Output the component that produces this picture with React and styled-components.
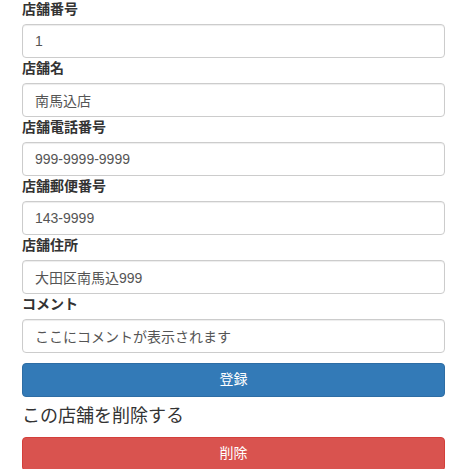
import React from "react";
import styled, { createGlobalStyle } from "styled-components";

const Global = createGlobalStyle`
  html, body { margin: 0; padding: 0; background: #fff; }
  body {
    font-family: "Liberation Sans", "Noto Sans CJK JP", sans-serif;
    font-size: 14px;
    line-height: 1.42857;
    color: #333;
  }
  * { box-sizing: border-box; }
`;

const Form = styled.form`
  display: flex;
  flex-direction: column;
  width: 423px;
  margin: -1px 0 0 22px;
`;

const Group = styled.div`
  display: flex;
  flex-direction: column;
`;

const Label = styled.label`
  font-weight: bold;
  font-size: 14px;
  line-height: 20px;
  margin-bottom: 5px;
  color: #333;
`;

const Input = styled.input`
  display: block;
  width: 100%;
  height: 34px;
  padding: 6px 12px;
  font-family: inherit;
  font-size: 14px;
  line-height: 1.42857;
  color: #555;
  background: #fff;
  border: 1px solid #ccc;
  border-radius: 4px;
  box-shadow: inset 0 1px 1px rgba(0, 0, 0, 0.075);
  outline: none;
`;

const Button = styled.button`
  display: block;
  width: 100%;
  height: 34px;
  margin-top: ${(p) => p.$top || 0}px;
  padding: 6px 12px;
  font-family: inherit;
  font-size: 14px;
  line-height: 1.42857;
  color: #fff;
  border: 1px solid ${(p) => (p.$danger ? "#d43f3a" : "#2e6da4")};
  background: ${(p) => (p.$danger ? "#d9534f" : "#337ab7")};
  border-radius: 4px;
  text-align: center;
  cursor: pointer;
`;

const Heading = styled.h4`
  font-size: 18px;
  font-weight: 400;
  line-height: 1.1;
  margin: 10px 0;
  color: #333;
`;

const fields = [
  ["店舗番号", "1"],
  ["店舗名", "南馬込店"],
  ["店舗電話番号", "999-9999-9999"],
  ["店舗郵便番号", "143-9999"],
  ["店舗住所", "大田区南馬込999"],
  ["コメント", "ここにコメントが表示されます"],
];

export default function App() {
  return (
    <>
      <Global />
      <Form onSubmit={(e) => e.preventDefault()}>
        {fields.map(([label, value], i) => (
          <Group key={i}>
            <Label htmlFor={`f${i}`}>{label}</Label>
            <Input id={`f${i}`} defaultValue={value} />
          </Group>
        ))}
        <Button type="button" $top={10}>登録</Button>
        <Heading>この店舗を削除する</Heading>
        <Button type="button" $danger>削除</Button>
      </Form>
    </>
  );
}
